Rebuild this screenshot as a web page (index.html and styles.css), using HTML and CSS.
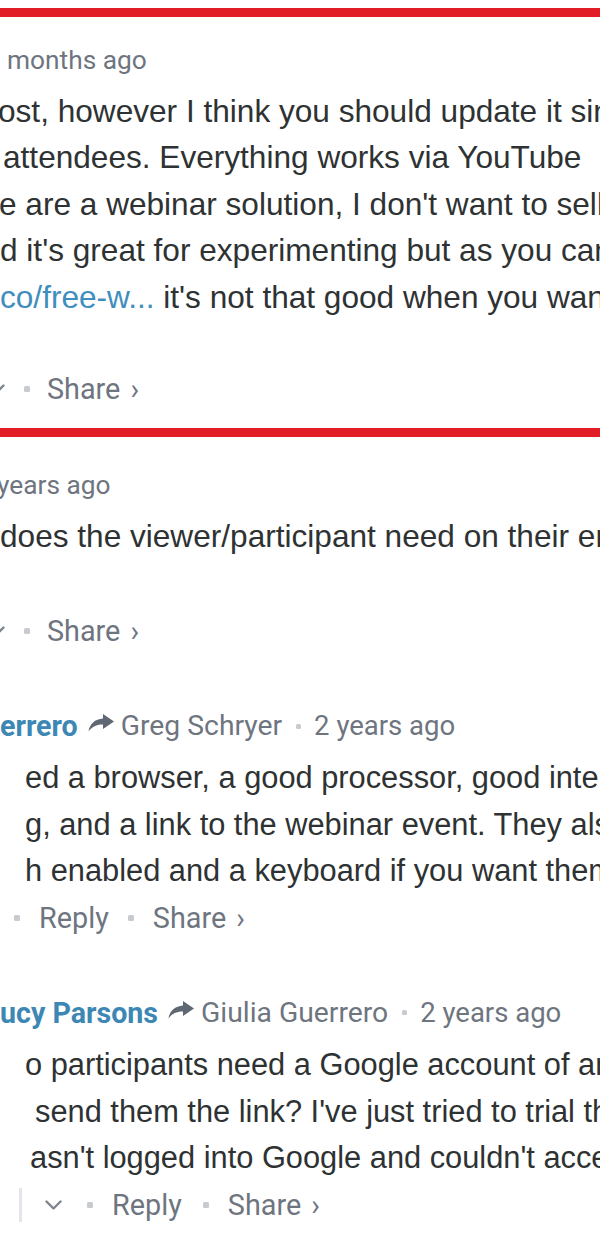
FILE: index.html
```html
<!DOCTYPE html>
<html>
<head>
<meta charset="utf-8">
<link rel="stylesheet" href="styles.css">
</head>
<body>
<div class="thread">
  <div class="post hl c1">
    <div class="head"><span class="meta" style="margin-left:7px">months ago</span></div>
    <div class="body extra">
      <div class="ln" style="margin-left:-2px">ost, however I think you should update it since</div>
      <div class="ln" style="margin-left:3px">attendees. Everything works via YouTube</div>
      <div class="ln" style="margin-left:-1px">e are a webinar solution, I don't want to sell you</div>
      <div class="ln" style="margin-left:0px">d it's great for experimenting but as you can</div>
      <div class="ln" style="margin-left:0px"><a class="link">co/free-w...</a> it's not that good when you want</div>
    </div>
    <div class="actions" style="margin-left:-12px">
      <svg class="chev" width="17" height="10" viewBox="0 0 17 10"><polyline points="1.5,1.5 8.5,8.5 15.5,1.5"/></svg>
      <span class="dot d1"></span>
      <span class="act">Share<span class="gt">›</span></span>
    </div>
  </div>

  <div class="post c2">
    <div class="head"><span class="meta" style="margin-left:-3px">years ago</span></div>
    <div class="body extra">
      <div class="ln">does the viewer/participant need on their end</div>
    </div>
    <div class="actions" style="margin-left:-12px">
      <svg class="chev" width="17" height="10" viewBox="0 0 17 10"><polyline points="1.5,1.5 8.5,8.5 15.5,1.5"/></svg>
      <span class="dot d1"></span>
      <span class="act">Share<span class="gt">›</span></span>
    </div>
  </div>

  <div class="post c3">
    <div class="head">
      <span class="name">errero</span>
      <svg class="arrow" width="26" height="18" viewBox="0 0 26 18"><path d="M15 0 L26 7.5 L15 15 L15 10.5 C9 10.3 4 12.5 0.5 17.5 C1.5 10 7 5 15 4.5 Z"/></svg>
      <span class="to">Greg Schryer</span>
      <span class="dot sm"></span>
      <span class="meta big">2 years ago</span>
    </div>
    <div class="body">
      <div class="ln" style="margin-left:25px">ed a browser, a good processor, good internet</div>
      <div class="ln" style="margin-left:25px">g, and a link to the webinar event. They also</div>
      <div class="ln" style="margin-left:25px">h enabled and a keyboard if you want them</div>
    </div>
    <div class="actions" style="margin-left:14px">
      <span class="dot"></span>
      <span class="act gap">Reply</span>
      <span class="dot gap"></span>
      <span class="act gap">Share<span class="gt">›</span></span>
    </div>
  </div>

  <div class="post c4">
    <div class="head">
      <span class="name">ucy Parsons</span>
      <svg class="arrow" width="26" height="18" viewBox="0 0 26 18"><path d="M15 0 L26 7.5 L15 15 L15 10.5 C9 10.3 4 12.5 0.5 17.5 C1.5 10 7 5 15 4.5 Z"/></svg>
      <span class="to">Giulia Guerrero</span>
      <span class="dot sm"></span>
      <span class="meta big">2 years ago</span>
    </div>
    <div class="body">
      <div class="ln" style="margin-left:25px">o participants need a Google account of any</div>
      <div class="ln" style="margin-left:35px">send them the link? I've just tried to trial this</div>
      <div class="ln" style="margin-left:30px">asn't logged into Google and couldn't access</div>
    </div>
    <div class="actions" style="margin-left:19px">
      <span class="bar"></span>
      <svg class="chev c4chev" width="17" height="10" viewBox="0 0 17 10"><polyline points="1.5,1.5 8.5,8.5 15.5,1.5"/></svg>
      <span class="dot d4"></span>
      <span class="act gap">Reply</span>
      <span class="dot gap g2"></span>
      <span class="act gap">Share<span class="gt">›</span></span>
    </div>
  </div>
</div>
</body>
</html>
```

FILE: styles.css
```css
html, body {
  margin: 0;
  padding: 0;
  background: #ffffff;
}

body {
  width: 600px;
  height: 1240px;
  overflow: hidden;
}

.thread {
  width: 600px;
  overflow: hidden;
  padding-top: 8px;
}

.post {
  white-space: nowrap;
}

.hl {
  border-top: 9px solid #e11d27;
  border-bottom: 9px solid #e11d27;
  padding-bottom: 19px;
}

.head {
  display: flex;
  align-items: center;
  height: 40px;
  line-height: 40px;
  font-family: Roboto, "Liberation Sans", sans-serif;
}

.c1 .head { margin-top: 22.5px; }
.c2 .head { margin-top: 27.5px; }
.c3 .head, .c4 .head { margin-top: 55px; }

.meta {
  font-size: 26.3px;
  color: #6e757f;
}

.meta.big {
  font-size: 27.5px;
}

.name {
  font-size: 28.6px;
  font-weight: 700;
  color: #3d87b4;
}

.to {
  font-size: 28.3px;
  color: #6e757f;
}

.arrow {
  fill: #5f6872;
  margin-left: 10px;
  margin-right: 7px;
  margin-top: -6px;
}

.body {
  margin-top: 8px;
  font-family: "Liberation Sans", Arial, sans-serif;
  font-size: 31.6px;
  line-height: 46.5px;
  color: #2e3233;
}

.c1 .body.extra { padding-bottom: 42.5px; }
.c2 .body.extra { padding-bottom: 45.5px; }
.c3 .body { margin-top: 9px; font-size: 30.8px; }
.c4 .body { margin-top: 9.8px; font-size: 30.8px; }

.ln {
  height: 46.5px;
}

.link {
  color: #3f8ebd;
}

.actions {
  display: flex;
  align-items: center;
  height: 40px;
  line-height: 40px;
  margin-top: 6.7px;
  font-family: Roboto, "Liberation Sans", sans-serif;
  font-size: 28.8px;
  color: #6e757f;
}

.c3 .actions { margin-top: 2.7px; }
.c4 .actions { margin-top: 3.4px; }

.gt {
  margin-left: 10px;
}

.act.gap, .dot.gap {
  margin-left: 19px;
}

.dot.g2 {
  margin-left: 21px;
}

.dot {
  display: inline-block;
  width: 6px;
  height: 6px;
  border-radius: 1.5px;
  background: #c7cbd0;
  flex: none;
}

.dot.sm {
  margin: 0 13px 0 14px;
  width: 5px;
  height: 5px;
}

.d1 {
  margin-left: 19px;
  margin-right: 17px;
}

.d4 {
  margin-left: 25px;
}

.chev {
  fill: none;
  stroke: #7d858e;
  stroke-width: 2.4;
  stroke-linecap: round;
  stroke-linejoin: round;
  flex: none;
}

.c4chev {
  margin-left: 23px;
}

.bar {
  display: inline-block;
  width: 3px;
  height: 34px;
  background: #e2e5e9;
  flex: none;
}
```
